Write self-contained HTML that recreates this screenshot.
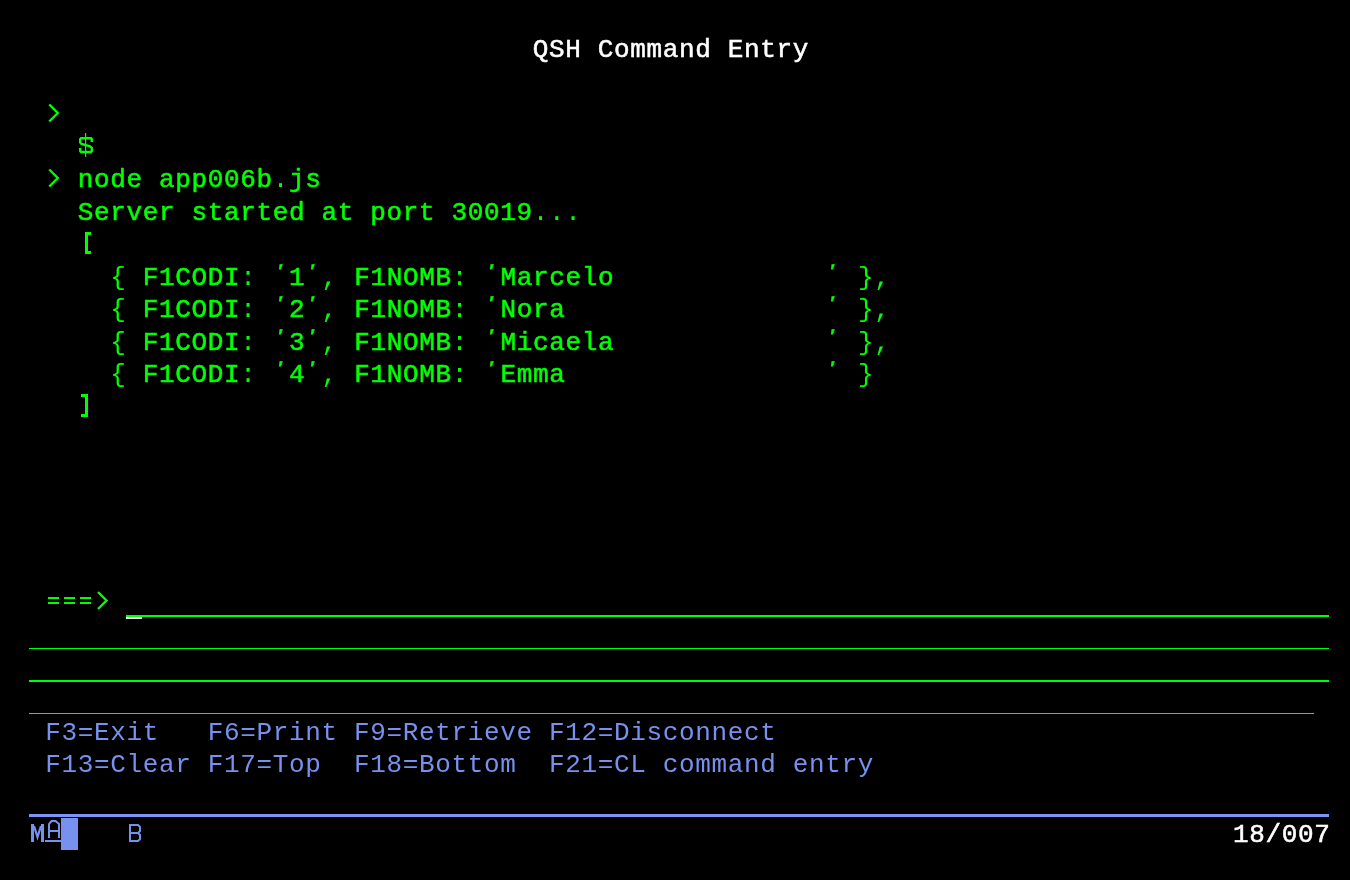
<!DOCTYPE html>
<html><head><meta charset="utf-8"><style>
html,body{margin:0;padding:0;background:#000;width:1350px;height:880px;overflow:hidden}
.scr{position:absolute;left:0;top:0;width:1350px;height:880px;will-change:transform}
.t{position:absolute;white-space:pre;font-family:"Liberation Mono",monospace;font-size:26.0px;line-height:30.0px;letter-spacing:0.6475px}
.b{-webkit-text-stroke:0.55px currentColor}
.b .p{-webkit-text-stroke:0}
.q{display:inline-block;-webkit-text-stroke:0.3px currentColor;transform:translate(1px,-1px) skewX(-14deg) scaleY(.62);transform-origin:50% 0}
.l{position:absolute}
</style></head><body><div class="scr">
<div class="t b" style="top:35.08px;left:532.75px;color:#ffffff">QSH Command Entry</div>
<div class="t b" style="top:165.08px;left:77.75px;color:#00ff00">node app006b<span class="p">.</span>js</div>
<div class="t b" style="top:197.58px;left:77.75px;color:#00ff00">Server started at port 30019<span class="p">.</span><span class="p">.</span><span class="p">.</span></div>
<div class="t b" style="top:262.58px;left:110.25px;color:#00ff00"><span class="p">{</span> F1CODI<span class="p">:</span> <span class="q">'</span>1<span class="q">'</span><span class="p">,</span> F1NOMB<span class="p">:</span> <span class="q">'</span>Marcelo             <span class="q">'</span> <span class="p">}</span><span class="p">,</span></div>
<div class="t b" style="top:295.08px;left:110.25px;color:#00ff00"><span class="p">{</span> F1CODI<span class="p">:</span> <span class="q">'</span>2<span class="q">'</span><span class="p">,</span> F1NOMB<span class="p">:</span> <span class="q">'</span>Nora                <span class="q">'</span> <span class="p">}</span><span class="p">,</span></div>
<div class="t b" style="top:327.58px;left:110.25px;color:#00ff00"><span class="p">{</span> F1CODI<span class="p">:</span> <span class="q">'</span>3<span class="q">'</span><span class="p">,</span> F1NOMB<span class="p">:</span> <span class="q">'</span>Micaela             <span class="q">'</span> <span class="p">}</span><span class="p">,</span></div>
<div class="t b" style="top:360.08px;left:110.25px;color:#00ff00"><span class="p">{</span> F1CODI<span class="p">:</span> <span class="q">'</span>4<span class="q">'</span><span class="p">,</span> F1NOMB<span class="p">:</span> <span class="q">'</span>Emma                <span class="q">'</span> <span class="p">}</span></div>
<div class="t " style="top:717.58px;left:45.25px;color:#7890ee">F3=Exit   F6=Print F9=Retrieve F12=Disconnect</div>
<div class="t " style="top:750.08px;left:45.25px;color:#7890ee">F13=Clear F17=Top  F18=Bottom  F21=CL command entry</div>
<div class="t b" style="top:820.08px;left:1232.96px;color:#ffffff">18/007</div>
<div class="l" style="left:126px;top:615px;width:1203px;height:2px;background:#00ff00"></div>
<div class="l" style="left:126px;top:617px;width:16px;height:2px;background:#ffffff"></div>
<div class="l" style="left:29px;top:648px;width:1300px;height:1px;background:#00ff00"></div>
<div class="l" style="left:29px;top:680px;width:1300px;height:2px;background:#00ff00"></div>
<div class="l" style="left:29px;top:713px;width:1285px;height:1px;background:#00ff00"></div>
<div class="l" style="left:29px;top:814px;width:1300px;height:3px;background:#7c94f6"></div>
<div class="l" style="left:61px;top:818px;width:17px;height:32px;background:#7890ee"></div>
<svg style="position:absolute;left:0;top:0" width="1350" height="880" viewBox="0 0 1350 880">
<g fill="none" stroke="#7890ee" stroke-width="2" stroke-linejoin="miter">
<path d="M49,838 V824 L51.5,821 H55.5 L59,824 V838"/>
<path d="M130,842 V825 H138 L140,827 V831 L138,833 H130 M138,833 L140,835 V839 L138,841 H130"/>
<path d="M34,826 L37.5,837 L41,826" stroke-width="2.2"/>
</g>
<g fill="none" stroke="#00ff00" stroke-width="2.4" stroke-linejoin="miter" stroke-miterlimit="10">
<path d="M49.25,104.50 L57.75,113.00 L49.25,121.50"/>
<path d="M49.25,169.50 L57.75,178.00 L49.25,186.50"/>
<path d="M98.00,592.00 L106.50,600.50 L98.00,609.00"/>
<path d="M91.8,142 V139.2 L91,138.2 H81 L80.2,139.2 V142.5 L81.5,144 L90,146.3 L91.8,148 V151 L91,152 H81 L80.2,151 V148"/>
</g>
<rect x="85" y="133" width="1.2" height="24" fill="#00ff00"/>
<g fill="#00ff00">
<rect x="48" y="597" width="11" height="2"/><rect x="48" y="602" width="11" height="2"/>
<rect x="64" y="597" width="11" height="2"/><rect x="64" y="602" width="11" height="2"/>
<rect x="80" y="597" width="11" height="2"/><rect x="80" y="602" width="11" height="2"/>
<rect x="85" y="232" width="3" height="22"/><rect x="85" y="232" width="6" height="3"/><rect x="85" y="251" width="6" height="3"/>
<rect x="85" y="394" width="3" height="23"/><rect x="81" y="394" width="7" height="3"/><rect x="81" y="414" width="7" height="3"/>
</g>
<g fill="#7890ee">
<rect x="31" y="824" width="3" height="18"/>
<rect x="41" y="824" width="3" height="18"/>
<rect x="50" y="830" width="8" height="2"/>
<rect x="45" y="840" width="16" height="2"/>
</g>
</svg>
</div></body></html>
